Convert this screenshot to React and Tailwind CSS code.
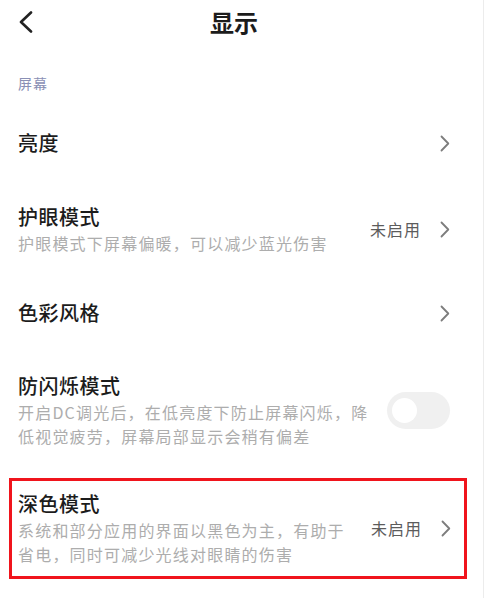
import React from 'react'

const Chevron = () => (
    <svg width="10" height="17" viewBox="0 0 10 17" fill="none">
        <path d="M1.5 1.5 L8.3 8.5 L1.5 15.5" stroke="#7d7d7d" strokeWidth="1.8" strokeLinecap="round" strokeLinejoin="round" />
    </svg>
)

const Toggle = () => (
    <div className="w-[63px] h-[37px] rounded-full bg-[#f0f0f0] flex items-center pl-[5px] shrink-0">
        <div className="w-[25px] h-[25px] rounded-full bg-white" />
    </div>
)

const Title = ({ children }) => (
    <div className="text-[20px] leading-[28px] tracking-[0.5px] font-medium text-[#1c1c1c]">{children}</div>
)

const Sub = ({ children }) => (
    <div className="text-[16px] leading-[24px] tracking-[1.2px] text-[#adadad]">{children}</div>
)

const Status = () => (
    <div className="flex items-center gap-[19px] shrink-0">
        <span className="text-[16px] tracking-[1px] text-[#5c5c5c]">未启用</span>
        <Chevron />
    </div>
)

const App = () => {
    return (
        <div
            className="w-[487px] h-[598px] bg-white overflow-hidden"
            style={{ fontFamily: '"Noto Sans CJK SC", "Noto Sans", sans-serif' }}
        >
            <div className="w-[484px] h-[598px] border-r border-[#ececec]">
                {/* Header */}
                <div className="h-[44px] flex items-center">
                    <svg className="ml-[18px]" width="15" height="22" viewBox="0 0 15 22" fill="none">
                        <path d="M13 1.5 L3 11 L13 20.5" stroke="#222" strokeWidth="2.6" strokeLinecap="round" strokeLinejoin="round" />
                    </svg>
                    <span className="ml-[177px] text-[24px] leading-[30px] font-bold text-[#1c1c1c]">显示</span>
                </div>

                {/* Section */}
                <div className="mt-[29px] pl-[18px] text-[14px] leading-[20px] tracking-[1px] text-[#8a90b5]">屏幕</div>

                {/* 亮度 */}
                <div className="mt-[14px] pt-[22px] pb-[22px] pl-[18px] pr-[33px] flex items-center justify-between">
                    <Title>亮度</Title>
                    <Chevron />
                </div>

                {/* 护眼模式 */}
                <div className="pt-[24px] pb-[22px] pl-[18px] pr-[33px] flex items-center justify-between">
                    <div>
                        <Title>护眼模式</Title>
                        <Sub>护眼模式下屏幕偏暖，可以减少蓝光伤害</Sub>
                    </div>
                    <Status />
                </div>

                {/* 色彩风格 */}
                <div className="pt-[22px] pb-[23px] pl-[18px] pr-[33px] flex items-center justify-between">
                    <Title>色彩风格</Title>
                    <Chevron />
                </div>

                {/* 防闪烁模式 */}
                <div className="pt-[22px] pb-[30px] pl-[18px] pr-[33px] flex items-center justify-between">
                    <div>
                        <Title>防闪烁模式</Title>
                        <Sub>开启DC调光后，在低亮度下防止屏幕闪烁，降<br />低视觉疲劳，屏幕局部显示会稍有偏差</Sub>
                    </div>
                    <Toggle />
                </div>

                {/* 深色模式 (highlighted) */}
                <div className="ml-[9px] w-[458px] border-[3px] border-[#f0141c] pt-[9px] pb-[10px] pl-[6px] pr-[13px] flex items-center justify-between">
                    <div>
                        <Title>深色模式</Title>
                        <Sub>系统和部分应用的界面以黑色为主，有助于<br />省电，同时可减少光线对眼睛的伤害</Sub>
                    </div>
                    <Status />
                </div>
            </div>
        </div>
    )
}

export default App
